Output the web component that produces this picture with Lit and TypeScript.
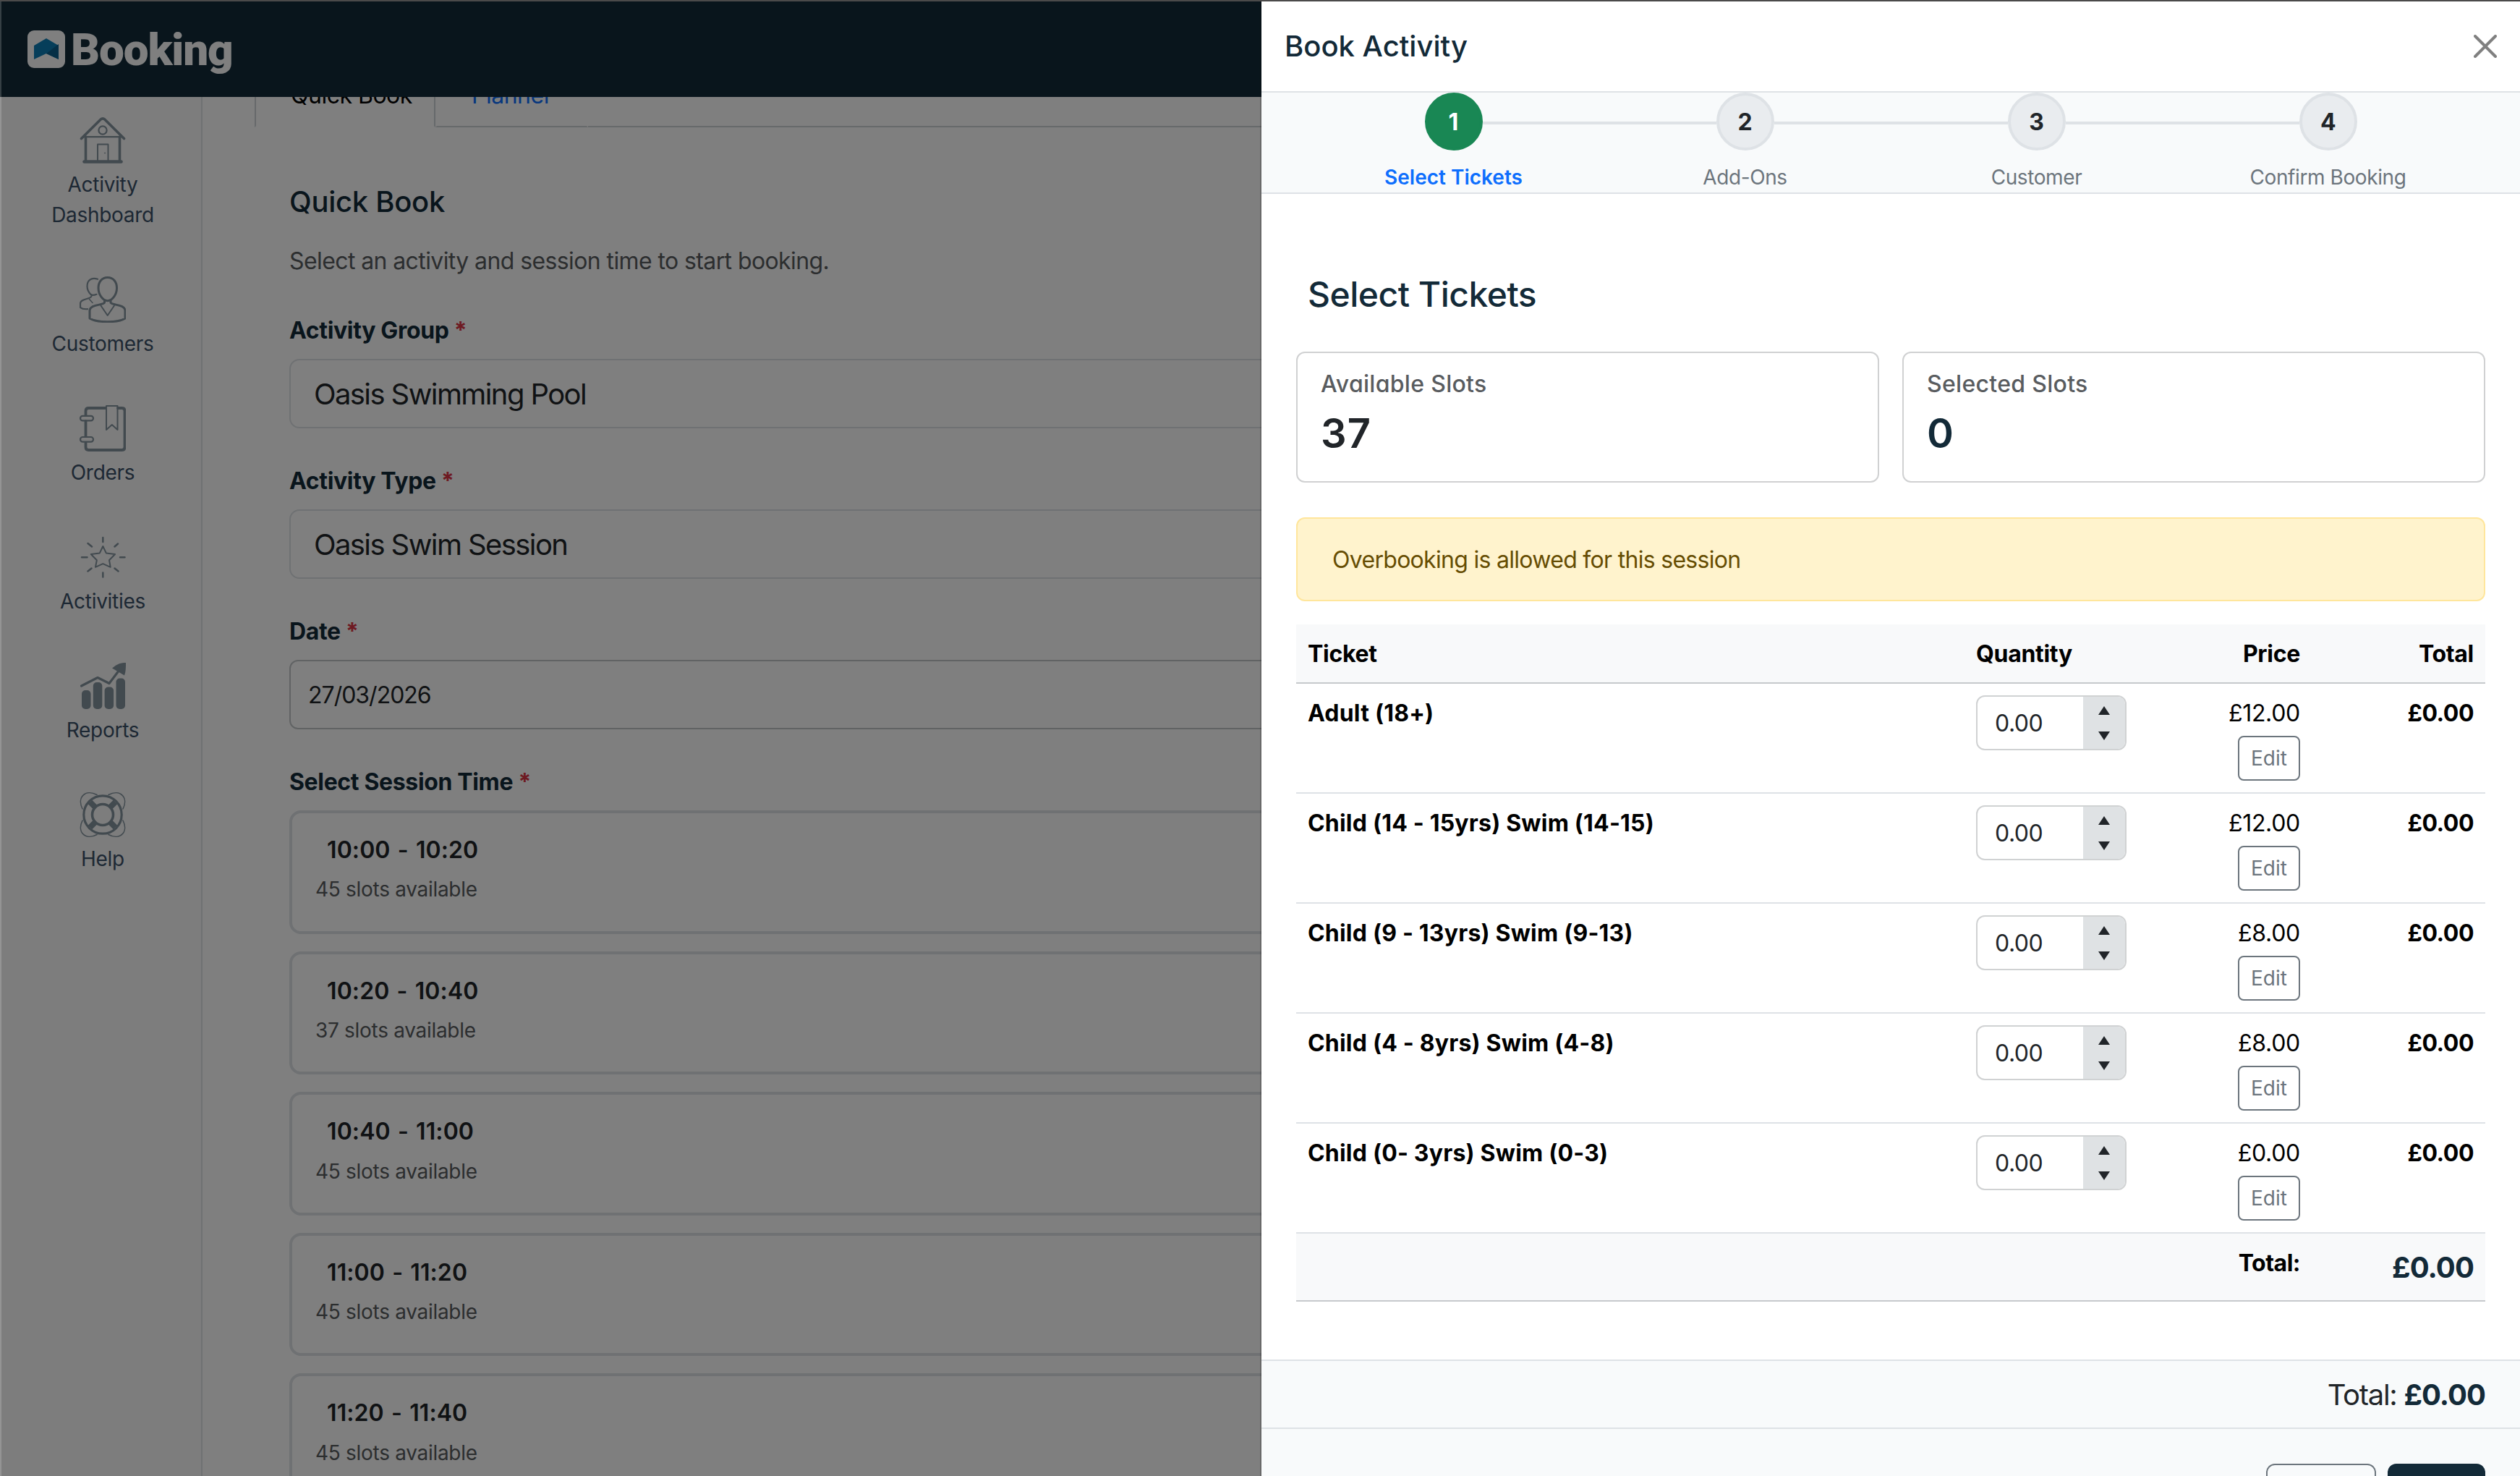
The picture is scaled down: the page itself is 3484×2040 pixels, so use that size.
import { LitElement, css, html, svg } from "lit";
import { customElement, property } from "lit/decorators.js";
import { classMap } from "lit/directives/class-map.js";

interface NavItem {
  label: string;
  icon: unknown;
}

interface Session {
  time: string;
  slots: number;
}

interface Ticket {
  name: string;
  price: string;
}

const NAV: NavItem[] = [
  {
    label: "Activity Dashboard",
    icon: svg`
      <path d="M2.5 29.5 29 3.2q3-2.6 6 0L61.5 29.5" stroke-width="3.6" />
      <path d="M8.5 27v33M55.5 27v33" stroke-width="3.6" />
      <path d="M6 27.2h52" stroke-width="2.2" />
      <path d="M6.5 61.5h51" stroke-width="4.6" />
      <circle cx="32" cy="18" r="5.6" stroke-width="2.2" />
      <path d="M25 60V37.5h14.5V60" stroke-width="2" />
      <circle cx="35" cy="49.5" r=".6" stroke-width="1" />
    `
  },
  {
    label: "Customers",
    icon: svg`
      <path d="M38.7 1.5C30.5 1.5 26 8 26 16c0 9 6 17.7 12.7 17.7S51.5 25 51.5 16c0-8-4.5-14.5-12.8-14.5z" stroke-width="3" />
      <path d="M34.5 33.5v2.7c-2 3.8-20.5 2.3-20.5 11.3V58c10 6.3 39.5 6.3 49 0V47.5c0-9-18-7.500-20-11.300v-2.700" stroke-width="3" />
      <path d="m29.5 40.5 9.2 13.5 9.2-13.5" stroke-width="2" />
      <path d="M25 3.8C16 .5 10.5 6 10.5 13.5c0 4 2 8.5 5 11.5 2 1.5 5 1 8-.2M16.5 27c0 5-15.5 3-15.5 10.500v5.500c2 1.700 5 2.500 10 2.200" stroke-width="2.2" />
      <path d="m13.5 31.5 4.5 5" stroke-width="1.5" />
    `
  },
  {
    label: "Orders",
    icon: svg`
      <path d="M8.5 14V8q0-4 4-4H36M53 4h5.5q4 0 4 4v50q0 4-4 4h-46q-4 0-4-4v-6M8.5 22v21" stroke-width="3.8" />
      <path d="M37 1h15.5v33l-7.7-7L37 34z" stroke-width="2" />
      <rect x="1" y="14.8" width="18" height="6.6" rx="3.3" stroke-width="2.2" />
      <rect x="1" y="44" width="18" height="6.6" rx="3.3" stroke-width="2.2" />
    `
  },
  {
    label: "Activities",
    icon: svg`
      <path d="m32.3 17 4.5 9.4L49 28l-8 8.2 1.7 9.6-10.4-4.6-10.3 4.6 1.8-9.6-8-8.2 12-1.6z" stroke-width="2" />
      <path d="M32.3 5v6M32.3 53.5v6M3 32.2h7.5M56 32.2h6.5M11.5 13l5.5 4.5M48.5 17.5 53 13.5M11.5 51.5l5-4M48.5 47.5l5 4" stroke-width="2.5" />
    `
  },
  {
    label: "Reports",
    icon: svg`
      <path d="M2.5 32 25 20.5 41 28.5 55 10" stroke-width="3.2" />
      <path class="solid" d="M64 0c-8-.3-13 2.5-19 7.5L62 17.5c2-5 2-11 2-17.5z" />
      <rect class="solid" x="3" y="38" width="12.5" height="26" rx="5" />
      <rect class="solid" x="18.8" y="27" width="12.5" height="37" rx="5" />
      <rect class="solid" x="34.6" y="33.5" width="12.5" height="30.5" rx="5" />
      <rect class="solid" x="50.5" y="21.5" width="12.5" height="42.5" rx="5" />
    `
  },
  {
    label: "Help",
    icon: svg`
      <circle cx="32" cy="32" r="26.2" stroke-width="3.2" />
      <circle cx="32" cy="32" r="14.5" stroke-width="3.6" />
      <path d="m14.5 14.5 7 7M49.5 14.5l-7 7M14.5 49.5l7-7M49.5 49.5l-7-7" stroke-width="8" stroke-linecap="butt" />
      <path d="M4 24C-4 8 8-4 24 4.5M60 24C68 8 56-4 40 4.5M4 40c-8 16 4 28 20 19.5M60 40c8 16-4 28-20 19.5" stroke-width="1.6" />
    `
  }
];

const SESSIONS: Session[] = [
  { time: "10:00 - 10:20", slots: 45 },
  { time: "10:20 - 10:40", slots: 37 },
  { time: "10:40 - 11:00", slots: 45 },
  { time: "11:00 - 11:20", slots: 45 },
  { time: "11:20 - 11:40", slots: 45 }
];

const STEPS = ["Select Tickets", "Add-Ons", "Customer", "Confirm Booking"];

const TICKETS: Ticket[] = [
  { name: "Adult (18+)", price: "£12.00" },
  { name: "Child (14 - 15yrs) Swim (14-15)", price: "£12.00" },
  { name: "Child (9 - 13yrs) Swim (9-13)", price: "£8.00" },
  { name: "Child (4 - 8yrs) Swim (4-8)", price: "£8.00" },
  { name: "Child (0- 3yrs) Swim (0-3)", price: "£0.00" }
];

@customElement("side-nav")
export class SideNav extends LitElement {
  static styles = css`
    :host {
      display: flex;
      flex-direction: column;
      gap: 64px;
      flex: none;
      width: 280px;
      box-sizing: border-box;
      padding: 28px 0 0 6px;
      background: #fbfbfb;
      border-right: 2px solid #dee2e6;
    }

    a {
      display: flex;
      flex-direction: column;
      align-items: center;
      gap: 8px;
      color: #3b5068;
      font-size: 28px;
      line-height: 42px;
      text-align: center;
      letter-spacing: -0.3px;
    }

    span {
      width: 160px;
    }

    svg {
      width: 64px;
      height: 64px;
      fill: none;
      stroke: #84949f;
      stroke-linecap: round;
      stroke-linejoin: round;
    }

    .solid {
      fill: #84949f;
      stroke: none;
    }
  `;

  render() {
    return html`
      ${NAV.map(
        (item) => html`
          <a>
            <svg viewBox="0 0 64 64">${item.icon}</svg>
            <span>${item.label}</span>
          </a>
        `
      )}
    `;
  }
}

@customElement("quick-book")
export class QuickBook extends LitElement {
  static styles = css`
    :host {
      display: block;
      flex: 1;
      padding-left: 72px;
      background: #fff;
      color: #212529;
    }

    /* scrolled partly under the top bar */
    .tabs {
      display: flex;
      margin-top: -44px;
      line-height: 48px;
    }

    .tab {
      padding: 16px 48px 18px;
      border: 2px solid transparent;
      border-bottom-color: #cdd2d6;
      color: #0d6efd;
      letter-spacing: -0.5px;
    }

    .tab.active {
      border-color: #cdd2d6;
      border-bottom-color: transparent;
      color: #000;
      border-radius: 12px 12px 0 0;
      width: 148px;
      padding-right: 50px;
      white-space: nowrap;
    }

    .rest {
      flex: 1;
      border-bottom: 2px solid #cdd2d6;
    }

    .content {
      padding: 79px 0 0 48px;
    }

    h2 {
      margin: 0 0 34px;
      font-size: 40px;
      line-height: 48px;
      font-weight: 500;
      color: #132a38;
      letter-spacing: -0.3px;
      font-feature-settings: "cv11";
    }

    .lead {
      margin: 0 0 48px;
      line-height: 48px;
      color: #595c5f;
      letter-spacing: -0.6px;
    }

    label {
      display: block;
      margin-bottom: 15px;
      line-height: 48px;
      font-weight: 700;
      color: #132a38;
      letter-spacing: -0.35px;
    }

    .required {
      color: #dc3545;
    }

    .field {
      display: flex;
      align-items: center;
      height: 96px;
      box-sizing: border-box;
      margin-bottom: 49px;
      padding-left: 32px;
      border: 2px solid #dee2e6;
      border-radius: 14px;
      font-size: 40px;
      letter-spacing: -1.6px;
    }

    .field.date {
      padding-left: 24px;
      border-color: #c3c6c8;
      border-radius: 12px;
      font-size: 32px;
      letter-spacing: -1px;
    }

    .session {
      height: 170.6px;
      box-sizing: border-box;
      margin-bottom: 24px;
      padding: 32px 32px 0;
      border: 4px solid #dee2e6;
      border-radius: 16px;
    }

    .time {
      margin: 0 0 14px 16px;
      line-height: 38.4px;
      font-weight: 600;
      letter-spacing: 0.1px;
      word-spacing: 2px;
    }

    .slots {
      font-size: 28px;
      line-height: 42px;
      color: #595c5f;
      letter-spacing: -0.3px;
    }
  `;

  private _label(text: string) {
    return html`<label>${text} <span class="required">*</span></label>`;
  }

  render() {
    return html`
      <div class="tabs">
        <div class="tab active">Quick Book</div>
        <div class="tab">Planner</div>
        <div class="rest"></div>
      </div>
      <div class="content">
        <h2>Quick Book</h2>
        <p class="lead">Select an activity and session time to start booking.</p>
        ${this._label("Activity Group")}
        <div class="field">Oasis Swimming Pool</div>
        ${this._label("Activity Type")}
        <div class="field">Oasis Swim Session</div>
        ${this._label("Date")}
        <div class="field date">27/03/2026</div>
        ${this._label("Select Session Time")}
        ${SESSIONS.map(
          (s) => html`
            <div class="session">
              <div class="time">${s.time}</div>
              <div class="slots">${s.slots} slots available</div>
            </div>
          `
        )}
      </div>
    `;
  }
}

@customElement("step-bar")
export class StepBar extends LitElement {
  static styles = css`
    :host {
      display: grid;
      grid-template-columns: repeat(4, 1fr);
      height: 138px;
      padding: 0 64px;
      background: #f8fafb;
      border-bottom: 2px solid #dee2e6;
    }

    .step {
      display: flex;
      flex-direction: column;
      gap: 16px;
      align-items: center;
      font-size: 28px;
      line-height: 42px;
      color: #6c757d;
      letter-spacing: -0.4px;
    }

    .track {
      display: flex;
      align-items: center;
      align-self: stretch;
    }

    /* connector halves on both sides of the number */
    .track::before,
    .track::after {
      content: "";
      flex: 1;
      height: 4px;
      margin-top: 4px;
      background: #dee2e6;
    }

    .step:first-child .track::before,
    .step:last-child .track::after {
      background: none;
    }

    .number {
      display: flex;
      align-items: center;
      justify-content: center;
      width: 80px;
      height: 80px;
      box-sizing: border-box;
      padding-top: 2px;
      border: 4px solid #dee2e6;
      border-radius: 50%;
      background: #e9ecef;
      color: #212529;
      font-size: 32px;
      font-weight: 700;
    }

    .current {
      color: #0d6efd;
      font-weight: 600;
      letter-spacing: 0;
    }

    .current .number {
      background: #198754;
      border-color: #198754;
      color: #fff;
    }
  `;

  @property({ type: Number })
  current = 0;

  render() {
    return html`
      ${STEPS.map(
        (step, i) => html`
          <div class=${classMap({ step: true, current: i === this.current })}>
            <div class="track"><div class="number">${i + 1}</div></div>
            <div>${step}</div>
          </div>
        `
      )}
    `;
  }
}

@customElement("ticket-table")
export class TicketTable extends LitElement {
  static styles = css`
    :host {
      display: block;
      color: #000;
      line-height: 48px;
    }

    .row {
      display: grid;
      grid-template-columns: 924px 240px 240px 240px;
      border-bottom: 2px solid #dee2e6;
      letter-spacing: -0.3px;
    }

    .row > div {
      padding: 17px 16px 15px;
    }

    .head {
      background: #f8f9fa;
      border-bottom-color: #c6c9cc;
      font-weight: 700;
    }

    .foot {
      background: #f8f9fa;
      border-bottom-color: #c6c9cc;
    }

    .name,
    .total {
      font-weight: 700;
    }

    .name {
      letter-spacing: 0.2px;
    }

    .total {
      letter-spacing: -0.5px;
    }

    .right {
      text-align: right;
    }

    .price {
      display: flex;
      flex-direction: column;
      align-items: flex-end;
      gap: 7px;
    }

    .row > .price {
      padding-bottom: 16px;
    }

    .grand {
      font-size: 40px;
      line-height: 60px;
      font-weight: 700;
      color: #132a38;
      letter-spacing: -0.9px;
    }

    .quantity {
      display: flex;
      width: 208px;
      height: 76px;
      box-sizing: border-box;
      margin-top: -1px;
      border: 2px solid #d0d2d3;
      border-radius: 12px;
      overflow: hidden;
      color: #212529;
    }

    .value {
      flex: 1;
      padding-left: 24px;
      line-height: 73px;
      letter-spacing: -0.5px;
    }

    .spinner {
      display: flex;
      flex-direction: column;
      align-items: center;
      justify-content: space-between;
      box-sizing: border-box;
      width: 58px;
      padding: 13px 0 12px;
      background: #dfe2e4;
    }

    .up,
    .down {
      border: 8px solid transparent;
      border-top-width: 0;
      border-bottom: 12px solid #212529;
    }

    .down {
      border-bottom-width: 0;
      border-top: 12px solid #212529;
    }

    button {
      width: 86px;
      height: 62px;
      padding: 0;
      border: 2px solid #6c757d;
      border-radius: 8px;
      background: transparent;
      color: #6c757d;
      font: inherit;
      font-size: 28px;
      line-height: 42px;
    }
  `;

  render() {
    return html`
      <div class="row head">
        <div>Ticket</div>
        <div>Quantity</div>
        <div class="right">Price</div>
        <div class="right">Total</div>
      </div>
      ${TICKETS.map(
        (t) => html`
          <div class="row">
            <div class="name">${t.name}</div>
            <div>
              <div class="quantity">
                <div class="value">0.00</div>
                <div class="spinner">
                  <i class="up"></i>
                  <i class="down"></i>
                </div>
              </div>
            </div>
            <div class="price">
              <span>${t.price}</span>
              <button>Edit</button>
            </div>
            <div class="total right">£0.00</div>
          </div>
        `
      )}
      <div class="row foot">
        <div></div>
        <div></div>
        <div class="total right">Total:</div>
        <div class="grand right">£0.00</div>
      </div>
    `;
  }
}

@customElement("booking-drawer")
export class BookingDrawer extends LitElement {
  static styles = css`
    :host {
      display: flex;
      flex-direction: column;
      box-sizing: border-box;
      background: #fff;
      color: #212529;
    }

    header {
      display: flex;
      align-items: center;
      justify-content: space-between;
      height: 126px;
      box-sizing: border-box;
      padding: 0 32px;
      border-bottom: 2px solid #dee2e6;
      color: #132a38;
      flex: none;
    }

    h1,
    h2 {
      margin: 0;
      font-size: 40px;
      line-height: 60px;
      font-weight: 500;
      font-feature-settings: "cv11";
    }

    h2 {
      margin: 0 16px 50px;
      font-size: 48px;
      line-height: 58px;
      color: #132a38;
      letter-spacing: -0.5px;
    }

    .close {
      width: 32px;
      height: 32px;
      stroke: #808080;
      stroke-width: 4;
      stroke-linecap: round;
    }

    .body {
      flex: 1;
      padding: 110px 48px 0;
    }

    .cards {
      display: grid;
      grid-template-columns: 1fr 1fr;
      gap: 32px;
    }

    .card {
      height: 181px;
      box-sizing: border-box;
      padding: 24px 32px;
      border: 2px solid #d0d1d2;
      border-radius: 12px;
    }

    .caption {
      margin-bottom: 16px;
      line-height: 38px;
      font-weight: 500;
      color: #595c5f;
      letter-spacing: 0.3px;
      font-feature-settings: "cv11";
    }

    .count {
      font-size: 56px;
      line-height: 67px;
      font-weight: 600;
      letter-spacing: 1px;
    }

    .dark {
      color: #132a38;
    }

    .alert {
      margin: 48px 0 32px;
      padding: 33px 48px 31px;
      border: 2px solid #ffe69c;
      border-radius: 12px;
      background: #fff3cd;
      color: #664d03;
      line-height: 48px;
      letter-spacing: -0.7px;
    }

    .sum {
      padding: 17px 48px 15px;
      border-top: 2px solid #dee2e6;
      border-bottom: 2px solid #dee2e6;
      background: #f8fafb;
      font-size: 40px;
      line-height: 60px;
      text-align: right;
      letter-spacing: -1.3px;
    }

    .sum b {
      font-weight: 700;
      color: #132a38;
      letter-spacing: -1px;
    }

    footer {
      display: flex;
      justify-content: flex-end;
      gap: 16px;
      height: 65px;
      box-sizing: border-box;
      padding: 48px 48px 0;
      background: #f8fafb;
      overflow: hidden;
    }

    .button {
      flex: none;
      box-sizing: border-box;
      width: 152px;
      height: 76px;
      border: 2px solid #6c757d;
      border-radius: 12px;
    }

    .button.primary {
      width: 135px;
      background: #132a38;
      border-color: #132a38;
    }
  `;

  render() {
    return html`
      <header>
        <h1>Book Activity</h1>
        <svg class="close" viewBox="0 0 32 32">
          <path d="M2 2 30 30M30 2 2 30" />
        </svg>
      </header>
      <step-bar .current=${0}></step-bar>
      <div class="body">
        <h2>Select Tickets</h2>
        <div class="cards">
          <div class="card">
            <div class="caption">Available Slots</div>
            <div class="count">37</div>
          </div>
          <div class="card">
            <div class="caption">Selected Slots</div>
            <div class="count dark">0</div>
          </div>
        </div>
        <div class="alert">Overbooking is allowed for this session</div>
        <ticket-table></ticket-table>
      </div>
      <div class="sum">Total: <b>£0.00</b></div>
      <footer>
        <div class="button"></div>
        <div class="button primary"></div>
      </footer>
    `;
  }
}

@customElement("app-root")
export class AppRoot extends LitElement {
  static styles = css`
    :host {
      display: flex;
      flex-direction: column;
      position: relative;
      width: 3484px;
      height: 2040px;
      box-sizing: border-box;
      border-top: 2px solid #4b4a4a;
      overflow: hidden;
      font-family: Inter, "Liberation Sans", sans-serif;
      font-size: 32px;
      background: #fff;
    }

    .topbar {
      display: flex;
      align-items: center;
      gap: 8px;
      flex: none;
      height: 132px;
      padding-left: 38px;
      background: #122a38;
      color: #fff;
    }

    .logo {
      width: 52px;
      height: 52px;
    }

    .brand {
      padding-top: 2px;
      font: 900 62px/72px Roboto, sans-serif;
      letter-spacing: -1.1px;
    }

    .page {
      display: flex;
      flex: 1;
      min-height: 0;
      overflow: hidden;
    }

    .backdrop {
      position: absolute;
      inset: 0;
      background: rgba(0, 0, 0, 0.5);
      border-left: 2px solid rgba(255, 255, 255, 0.18);
    }

    booking-drawer {
      position: absolute;
      top: 0;
      right: 0;
      bottom: 0;
      width: 1740px;
      box-shadow: 0 0 0 2px rgba(0, 0, 0, 0.18);
    }
  `;

  render() {
    return html`
      <div class="topbar">
        <svg class="logo" viewBox="0 0 52 52">
          <rect width="52" height="52" rx="9" fill="#fff" />
          <path d="M26 11 43 21v19L26 32 9 40V21z" fill="#0c7db5" />
          <path d="m26 32 17-13v21z" fill="#0a5f8c" />
        </svg>
        <span class="brand">Booking</span>
      </div>
      <div class="page">
        <side-nav></side-nav>
        <quick-book></quick-book>
      </div>
      <div class="backdrop"></div>
      <booking-drawer></booking-drawer>
    `;
  }
}
